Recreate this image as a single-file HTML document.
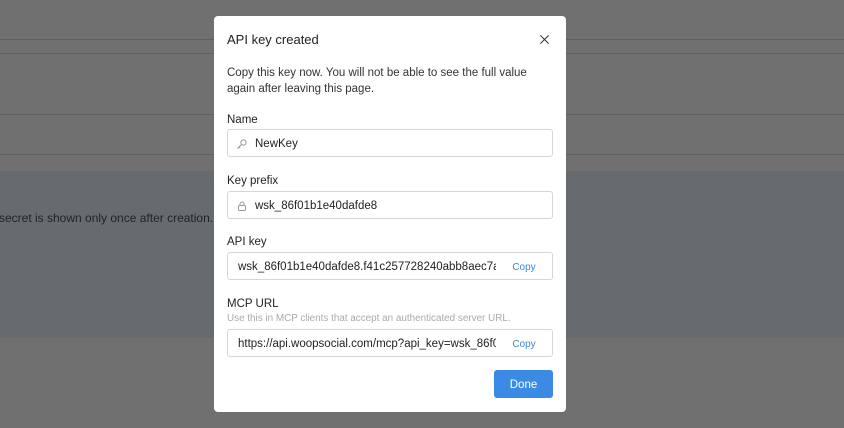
<!DOCTYPE html>
<html><head><style>
*{box-sizing:border-box;margin:0;padding:0}
body{width:844px;height:428px;background:#707070;font-family:"Liberation Sans",sans-serif;position:relative;overflow:hidden}
.l{position:absolute;left:0;width:844px;height:1px;background:#5f5f5f}
.panel{position:absolute;left:0;top:171px;width:844px;height:167px;background:#676b6f}
.bgt{position:absolute;left:-1px;top:211px;font-size:12px;color:#1f2226}
.modal{position:absolute;left:214px;top:16px;width:352px;height:396px;background:#fff;border-radius:4px}
.t{position:absolute;left:13px;top:16px;font-size:13px;color:#222}
.x{position:absolute;left:325px;top:18px}
.p{position:absolute;left:13px;top:49px;font-size:11.5px;line-height:16px;color:#333;width:330px}
.lab{position:absolute;left:13px;font-size:11.5px;color:#222}
.in{position:absolute;left:13px;width:326px;height:28px;border:1px solid #d6d6d6;border-radius:3px;font-size:11.5px;color:#222;line-height:28px;white-space:nowrap;overflow:hidden}
.cp{position:absolute;right:0;top:0;width:56px;height:26px;background:#fff;color:#3b86db;font-size:10px;text-align:center;line-height:29px}
.hint{position:absolute;left:13px;top:297px;font-size:9.9px;color:#aaa}
.btn{position:absolute;left:280px;top:354px;width:59px;height:28px;background:#3b8be4;border-radius:3px;color:#fff;font-size:11.5px;text-align:center;line-height:30px}
</style></head><body>
<div class="l" style="top:39px"></div><div class="l" style="top:53px"></div>
<div class="l" style="top:114px"></div><div class="l" style="top:154px"></div>
<div class="panel"></div>
<div class="bgt">secret is shown only once after creation.</div>
<div class="modal">
<div class="t">API key created</div>
<svg class="x" width="11" height="11" viewBox="0 0 12 12"><path d="M1.5 1.5L10.5 10.5M10.5 1.5L1.5 10.5" stroke="#333" stroke-width="1.1"/></svg>
<div class="p">Copy this key now. You will not be able to see the full value again after leaving this page.</div>
<div class="lab" style="top:98px">Name</div>
<div class="in" style="top:113px;padding-left:27px">NewKey
<svg style="position:absolute;left:8px;top:8px" width="12" height="12" viewBox="0 0 12 12"><circle cx="7.5" cy="4.5" r="2.6" fill="none" stroke="#999"/><path d="M5.6 6.4L1.5 10.5M3 9l1.2 1.2" stroke="#999" fill="none"/></svg></div>
<div class="lab" style="top:159px">Key prefix</div>
<div class="in" style="top:175px;padding-left:27px">wsk_86f01b1e40dafde8
<svg style="position:absolute;left:8px;top:8px" width="12" height="12" viewBox="0 0 12 12"><rect x="2.5" y="5.5" width="7" height="5" rx="1" fill="none" stroke="#999"/><path d="M4 5.5V4a2 2 0 0 1 4 0v1.5" fill="none" stroke="#999"/></svg></div>
<div class="lab" style="top:220px">API key</div>
<div class="in" style="top:236px;padding-left:10px">wsk_86f01b1e40dafde8.f41c257728240abb8aec7a1<div class="cp">Copy</div></div>
<div class="lab" style="top:282px">MCP URL</div>
<div class="hint">Use this in MCP clients that accept an authenticated server URL.</div>
<div class="in" style="top:313px;padding-left:10px">https://api.woopsocial.com/mcp?api_key=wsk_86f01<div class="cp">Copy</div></div>
<div class="btn">Done</div>
</div>
</body></html>
